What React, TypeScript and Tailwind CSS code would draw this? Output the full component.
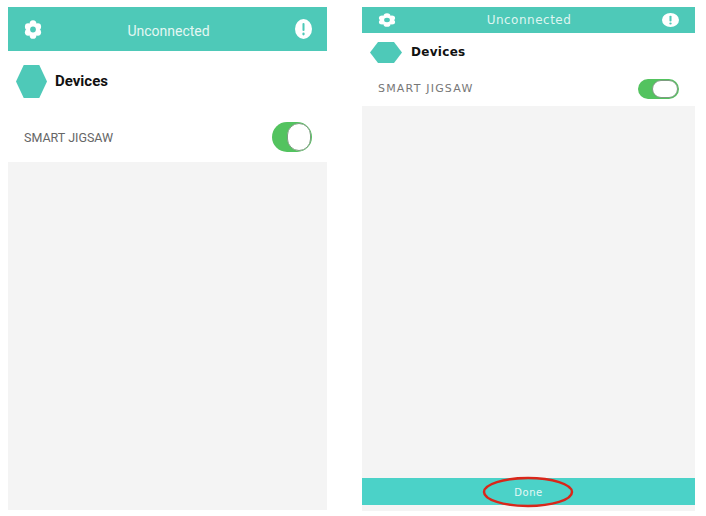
const Gear = ({ className }: { className: string }) => (
  <svg viewBox="0 0 20 20" preserveAspectRatio="none" className={className}>
    <circle cx="10" cy="10" r="7" fill="#fff" />
    <circle cx="10" cy="4" r="3.8" fill="#fff" />
    <circle cx="10" cy="16" r="3.8" fill="#fff" />
    <circle cx="4.6" cy="7" r="3.6" fill="#fff" />
    <circle cx="15.4" cy="7" r="3.6" fill="#fff" />
    <circle cx="4.6" cy="13" r="3.6" fill="#fff" />
    <circle cx="15.4" cy="13" r="3.6" fill="#fff" />
    <circle cx="10" cy="10" r="3.2" fill="#4ec9b8" />
  </svg>
)

const Alert = ({ className }: { className: string }) => (
  <svg viewBox="0 0 20 20" preserveAspectRatio="none" className={className}>
    <circle cx="10" cy="10" r="10" fill="#fff" />
    <rect x="8.8" y="4" width="2.4" height="8" rx="1.1" fill="#4ec9b8" />
    <circle cx="10" cy="15" r="1.4" fill="#4ec9b8" />
  </svg>
)

const Hexagon = ({ className }: { className: string }) => (
  <svg viewBox="0 0 32 32" preserveAspectRatio="none" className={className}>
    <polygon points="0,16 8,0 24,0 32,16 24,32 8,32" fill="#4ec9b8" />
  </svg>
)

const Toggle = ({ className, knob }: { className: string; knob: string }) => (
  <div className={`flex items-center justify-end rounded-full bg-[#53c35f] p-[1px] ${className}`}>
    <div className={`h-full rounded-full border border-[#7d9c80] bg-white ${knob}`} />
  </div>
)

export default function App() {
  return (
    <div className="flex h-[516px] w-[706px] bg-white pl-2 pt-[7px] font-['Liberation_Sans',sans-serif]">
      {/* left phone */}
      <section className="flex h-[503px] w-[319px] flex-col bg-[#f4f4f4]">
        <header className="flex h-[44px] items-center justify-between bg-[#4ec9b8] pl-4 pr-[15px]">
          <Gear className="h-[19px] w-[18px]" />
          <span className="pt-[4px] font-['Roboto',sans-serif] text-[14px] text-[#e4f7f3]">Unconnected</span>
          <Alert className="h-[20px] w-[17px]" />
        </header>
        <div className="bg-white">
          <div className="flex h-[60px] items-center gap-2 pl-2">
            <Hexagon className="h-[33px] w-[31px]" />
            <span className="font-['Roboto',sans-serif] text-[15px] font-bold text-[#111]">Devices</span>
          </div>
          <div className="flex h-[51px] items-center justify-between pl-4 pr-[15px]">
            <span className="pt-[3px] font-['Roboto',sans-serif] text-[12.5px] text-[#666]">SMART JIGSAW</span>
            <Toggle className="h-[30px] w-[40px]" knob="w-[24px]" />
          </div>
        </div>
      </section>

      {/* right phone */}
      <section className="relative ml-[35px] flex h-[504px] w-[333px] flex-col bg-[#f4f4f4]">
        <header className="flex h-[26px] items-center justify-between bg-[#4ec9b8] pl-4 pr-4">
          <Gear className="h-[14px] w-[18px]" />
          <span className="font-['DejaVu_Sans',sans-serif] text-[12px] tracking-[0.5px] text-[#dff5f1]">Unconnected</span>
          <Alert className="h-[14px] w-[17px]" />
        </header>
        <div className="bg-white">
          <div className="flex h-[38px] items-center gap-[9px] pl-2">
            <Hexagon className="h-[21px] w-[32px]" />
            <span className="font-['DejaVu_Sans',sans-serif] text-[12px] font-bold tracking-[0.3px] text-[#111]">Devices</span>
          </div>
          <div className="flex h-[35px] items-center justify-between pl-4 pr-4">
            <span className="pt-[1px] font-['DejaVu_Sans',sans-serif] text-[11px] tracking-[1.2px] text-[#777]">SMART JIGSAW</span>
            <Toggle className="h-[20px] w-[41px]" knob="w-[26px]" />
          </div>
        </div>
        <div className="flex-1" />
        <div className="mb-[6px] flex h-[27px] items-center justify-center bg-[#4bd2c8] pt-[1px]">
          <span className="font-['DejaVu_Sans',sans-serif] text-[10px] tracking-[0.6px] text-[#e6f8f6]">Done</span>
        </div>
        {/* red hand-drawn circle over the button */}
        <svg viewBox="0 0 92 32" className="absolute bottom-[3px] left-[120px] h-[32px] w-[92px]">
          <ellipse cx="46" cy="16" rx="44" ry="14" fill="none" stroke="#d9261a" strokeWidth="2.5" />
        </svg>
      </section>
    </div>
  )
}
